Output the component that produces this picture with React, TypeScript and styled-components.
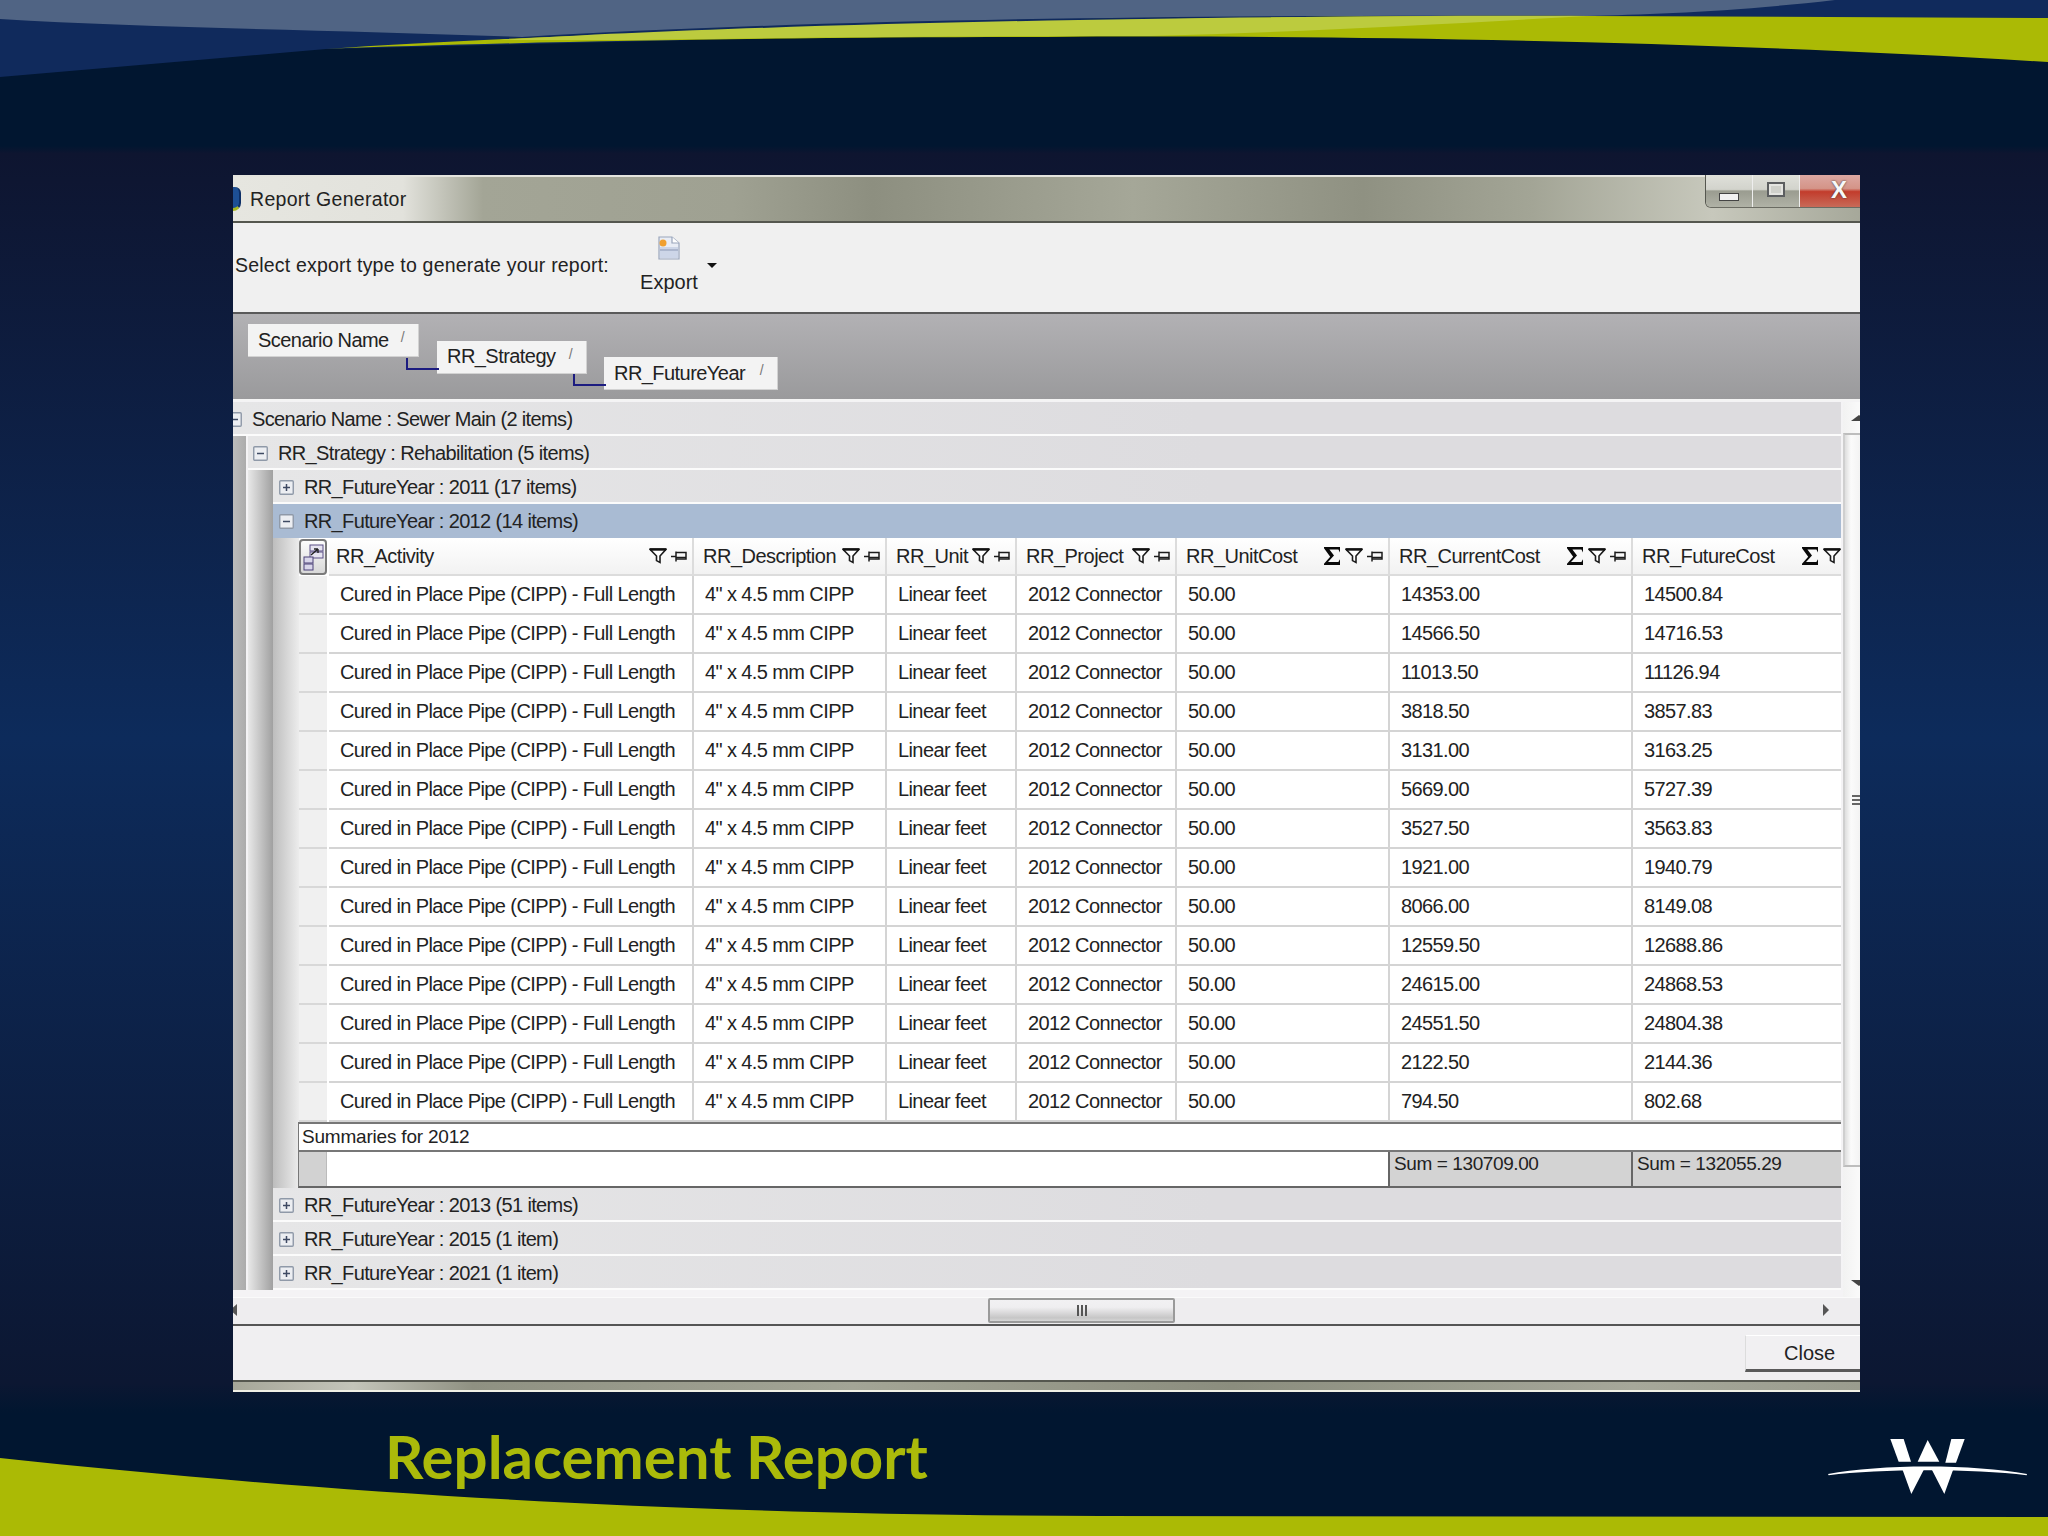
import React from 'react'
import styled, { createGlobalStyle } from 'styled-components'

const COLUMNS = '30px 365px 193px 130px 160px 213px 243px 208px'

const costs = [
  ['14353.00', '14500.84'],
  ['14566.50', '14716.53'],
  ['11013.50', '11126.94'],
  ['3818.50', '3857.83'],
  ['3131.00', '3163.25'],
  ['5669.00', '5727.39'],
  ['3527.50', '3563.83'],
  ['1921.00', '1940.79'],
  ['8066.00', '8149.08'],
  ['12559.50', '12688.86'],
  ['24615.00', '24868.53'],
  ['24551.50', '24804.38'],
  ['2122.50', '2144.36'],
  ['794.50', '802.68'],
]

const headers = [
  { title: 'RR_Activity', sum: false, pin: true },
  { title: 'RR_Description', sum: false, pin: true },
  { title: 'RR_Unit', sum: false, pin: true },
  { title: 'RR_Project', sum: false, pin: true },
  { title: 'RR_UnitCost', sum: true, pin: true },
  { title: 'RR_CurrentCost', sum: true, pin: true },
  { title: 'RR_FutureCost', sum: true, pin: false },
]

const FilterIcon = () => (
  <svg width="18" height="16" viewBox="0 0 18 16">
    <path d="M1 1.4H17L11 8V14.5L7.5 12.6V8Z" fill="#fff" stroke="#1c1c1c" strokeWidth="1.6" />
    <path d="M1 1.4H17" stroke="#111" strokeWidth="2.4" />
  </svg>
)

const PinIcon = () => (
  <svg width="16" height="13" viewBox="0 0 16 13">
    <path d="M0 6.5H5M5 1.5V11.5M5 2.5H15V9H5" fill="none" stroke="#1c1c1c" strokeWidth="1.5" />
    <path d="M5 7.5H15" stroke="#1c1c1c" strokeWidth="1.5" />
  </svg>
)

const SigmaIcon = () => (
  <svg width="18" height="20" viewBox="0 0 18 20">
    <path d="M1 1H17V6.5L15.4 3.6H6.4L11 9.6L5 16H15.4L17 13.2V19H1V17.8L7.2 10.8L1 2.2Z" fill="#0a0a0a" />
  </svg>
)

const Expander = ({ open }: { open: boolean }) => (
  <svg width="15" height="15" viewBox="0 0 15 15">
    <rect x="0.75" y="0.75" width="13.5" height="13.5" rx="1" fill="#eceef2" stroke="#8f99a8" strokeWidth="1.4" />
    <path d={open ? 'M4 7.5H11' : 'M4 7.5H11M7.5 4V11'} stroke="#3e4a63" strokeWidth="1.5" />
  </svg>
)

const ColumnsIcon = () => (
  <svg width="21" height="27" viewBox="0 0 21 27">
    <rect x="7" y="1" width="13" height="6" fill="#e6e4f0" stroke="#5a4f86" />
    <rect x="7" y="8" width="13" height="6" fill="#e6e4f0" stroke="#5a4f86" />
    <rect x="1" y="13" width="9" height="6" fill="#d9d6ea" stroke="#4b4178" />
    <rect x="1" y="20" width="9" height="6" fill="#d9d6ea" stroke="#4b4178" />
    <path d="M8 11L15 5M15 5H11M15 5V9" fill="none" stroke="#222" strokeWidth="1.4" />
  </svg>
)

const ExportIcon = () => (
  <svg width="22" height="24" viewBox="0 0 22 24">
    <path d="M1 1H14L21 7V23H1Z" fill="#e9edf5" stroke="#9aa6bc" strokeWidth="1.2" />
    <path d="M14 1V7H21" fill="#fff" stroke="#9aa6bc" strokeWidth="1.2" />
    <rect x="2" y="11" width="18" height="11" fill="#cdd6e8" />
    <path d="M2 14H20" stroke="#8b97b3" />
    <circle cx="5" cy="7" r="3.5" fill="#f0a030" />
  </svg>
)

const Logo = () => (
  <LogoMark width="199" height="55" viewBox="143 57 597 165">
    <path d="M330 57H370L392 125H355Z" fill="#fff" />
    <path d="M442 60L477 125H412Z" fill="#fff" />
    <path d="M513 57H553L527 128H495Z" fill="#fff" />
    <path d="M143 162C300 132 580 132 740 162L739 166C580 146 300 146 145 166Z" fill="#fff" />
    <path d="M365 145H520L492 222L455 150H430L393 222Z" fill="#fff" />
  </LogoMark>
)

const App: React.FunctionComponent = () => (
  <Page>
    <GlobalStyle />
    <Backdrop viewBox="0 0 2048 1536" preserveAspectRatio="none">
      <defs>
        <linearGradient id="slide" x1="0" y1="0" x2="0" y2="1536" gradientUnits="userSpaceOnUse">
          <stop offset="0" stopColor="#011630" />
          <stop offset="0.095" stopColor="#011630" />
          <stop offset="0.1" stopColor="#0e1530" />
          <stop offset="0.48" stopColor="#0d2b5b" />
          <stop offset="0.9" stopColor="#0c1732" />
          <stop offset="0.92" stopColor="#011630" />
          <stop offset="1" stopColor="#011630" />
        </linearGradient>
      </defs>
      <rect width="2048" height="1536" fill="url(#slide)" />
      <path d="M0 0H2048V18H1587L326 49L0 77Z" fill="#102a5c" />
      <path d="M0 0H1835C1730 12 1650 14 1587 16C1200 14 800 20 522 37C340 30 150 28 0 19Z" fill="#506484" />
      <path d="M326 49C600 30 1200 14 1587 16L2048 18V62C1700 40 1300 35 1045 37C800 37 500 42 326 49Z" fill="#abba05" />
      <path d="M500 40C750 24 1200 15 1587 16C1450 24 1300 32 1150 36C950 36 750 38 640 40Z" fill="#bccb3e" />
      <path d="M0 1458C300 1490 650 1515 1100 1516L2048 1517V1536H0Z" fill="#abba05" />
    </Backdrop>

    <WindowSlot>
      <Window>
        <TitleBar>
          <AppIcon />
          <TitleText>Report Generator</TitleText>
          <Caption>
            <CaptionButton>
              <MinGlyph />
            </CaptionButton>
            <CaptionButton>
              <MaxGlyph />
            </CaptionButton>
            <CloseButton>X</CloseButton>
          </Caption>
        </TitleBar>

        <Toolbar>
          <ToolbarLabel>Select export type to generate your report:</ToolbarLabel>
          <ExportButton>
            <ExportIcon />
            <ExportLabel>Export</ExportLabel>
          </ExportButton>
          <DropArrow />
        </Toolbar>

        <GroupPanel>
          <Chip $level={0} $width={171}>
            Scenario Name<SortMark>/</SortMark>
          </Chip>
          <Chip $level={1} $width={150} $gap={18}>
            RR_Strategy<SortMark>/</SortMark>
          </Chip>
          <Chip $level={2} $width={174} $gap={17}>
            RR_FutureYear<SortMark>/</SortMark>
          </Chip>
        </GroupPanel>

        <GridArea>
          <Tree>
            <GroupRow $pad={0} $nudge={-6}>
              <Expander open />
              <GroupText>Scenario Name : Sewer Main (2 items)</GroupText>
            </GroupRow>
            <Indent>
              <Gutter $width={13} $tone="outer" />
              <IndentBody>
                <GroupRow $pad={5}>
                  <Expander open />
                  <GroupText>RR_Strategy : Rehabilitation (5 items)</GroupText>
                </GroupRow>
                <Indent>
                  <Gutter $width={25} $tone="middle" />
                  <IndentFill>
                    <GroupRow $pad={6}>
                      <Expander open={false} />
                      <GroupText>RR_FutureYear : 2011 (17 items)</GroupText>
                    </GroupRow>
                    <GroupRow $pad={6} $selected>
                      <Expander open />
                      <GroupText>RR_FutureYear : 2012 (14 items)</GroupText>
                    </GroupRow>
                    <Indent>
                      <Gutter $width={26} $tone="inner" />
                      <TableBlock>
                        <HeaderRow>
                          <CornerCell>
                            <ColumnsIcon />
                          </CornerCell>
                          {headers.map(h => (
                            <HeaderCell key={h.title}>
                              <HeaderTitle>{h.title}</HeaderTitle>
                              {h.sum && <SigmaIcon />}
                              <FilterIcon />
                              {h.pin && <PinIcon />}
                            </HeaderCell>
                          ))}
                        </HeaderRow>
                        {costs.map(([current, future], i) => (
                          <DataRow key={i}>
                            <SelectorCell />
                            <DataCell>Cured in Place Pipe (CIPP) - Full Length</DataCell>
                            <DataCell>4" x 4.5 mm CIPP</DataCell>
                            <DataCell>Linear feet</DataCell>
                            <DataCell>2012 Connector</DataCell>
                            <DataCell>50.00</DataCell>
                            <DataCell>{current}</DataCell>
                            <DataCell>{future}</DataCell>
                          </DataRow>
                        ))}
                        <SummaryTitle>Summaries for 2012</SummaryTitle>
                        <SummaryRow>
                          <SummarySelector />
                          <SummaryBlank />
                          <SummaryCell>Sum = 130709.00</SummaryCell>
                          <SummaryCell>Sum = 132055.29</SummaryCell>
                        </SummaryRow>
                      </TableBlock>
                    </Indent>
                    <GroupRow $pad={6}>
                      <Expander open={false} />
                      <GroupText>RR_FutureYear : 2013 (51 items)</GroupText>
                    </GroupRow>
                    <GroupRow $pad={6}>
                      <Expander open={false} />
                      <GroupText>RR_FutureYear : 2015 (1 item)</GroupText>
                    </GroupRow>
                    <GroupRow $pad={6}>
                      <Expander open={false} />
                      <GroupText>RR_FutureYear : 2021 (1 item)</GroupText>
                    </GroupRow>
                  </IndentFill>
                </Indent>
              </IndentBody>
            </Indent>
          </Tree>
          <VScroll>
            <VArrowSlot>
              <ArrowUp />
            </VArrowSlot>
            <VThumb>
              <Grip />
              <Grip />
              <Grip />
            </VThumb>
            <VArrowSlot $end>
              <ArrowDown />
            </VArrowSlot>
          </VScroll>
        </GridArea>

        <HScroll>
          <ArrowLeft />
          <HThumb>
            <HGrip />
            <HGrip />
            <HGrip />
          </HThumb>
          <ArrowRight />
        </HScroll>

        <WindowFooter>
          <CloseAction>Close</CloseAction>
        </WindowFooter>
        <BottomFrame />
      </Window>
    </WindowSlot>

    <SlideFooter>
      <SlideTitle>Replacement Report</SlideTitle>
      <Logo />
    </SlideFooter>
  </Page>
)

export default App

const GlobalStyle = createGlobalStyle`
  html, body {
    margin: 0;
    padding: 0;
    background: #011630;
  }
  * {
    box-sizing: border-box;
  }
`

const Page = styled.div`
  position: relative;
  width: 2048px;
  height: 1536px;
  overflow: hidden;
  font-family: 'Liberation Sans', Arial, sans-serif;
  font-size: 20px;
  color: #222;
`

const Backdrop = styled.svg`
  position: absolute;
  inset: 0;
  width: 2048px;
  height: 1536px;
`

const WindowSlot = styled.div`
  position: relative;
  padding: 175px 188px 0 233px;
`

const Window = styled.div`
  width: 1627px;
  height: 1217px;
  display: flex;
  flex-direction: column;
  overflow: hidden;
  background: #f0eff1;
`

const TitleBar = styled.div`
  height: 48px;
  flex: none;
  display: flex;
  align-items: center;
  position: relative;
  border-top: 2px solid #e4e4de;
  border-bottom: 2px solid #55574f;
  background: linear-gradient(
    90deg,
    #e6e6e0 0,
    #e2e2dc 170px,
    #a3a596 250px,
    #9fa192 500px,
    #8d8f80 640px,
    #a5a798 900px,
    #8f9182 1130px,
    #a3a596 1300px,
    #c7c8bc 1480px,
    #a6a89a 1627px
  );
`

const AppIcon = styled.span`
  width: 8px;
  height: 24px;
  margin-right: 9px;
  border-radius: 0 6px 8px 0;
  background: #1d4f94;
  border-right: 2px solid #0d2f66;
  border-bottom: 3px solid #a8b820;
`

const TitleText = styled.span`
  font-size: 19.5px;
  letter-spacing: 0.3px;
`

const Caption = styled.div`
  position: absolute;
  top: -2px;
  right: 0;
  height: 33px;
  width: 155px;
  display: flex;
  border-left: 1px solid #55574f;
  border-bottom: 1px solid #6a6b62;
  border-radius: 0 0 0 6px;
  overflow: hidden;
`

const CaptionButton = styled.div`
  width: 47px;
  display: flex;
  align-items: center;
  justify-content: center;
  border-right: 1px solid #eee;
  background: linear-gradient(#dfe0da, #d2d3cc 45%, #9a9c90 50%, #b0b2a6);
`

const MinGlyph = styled.span`
  width: 20px;
  height: 8px;
  margin-top: 12px;
  background: #f2f2f2;
  border: 1px solid #444;
`

const MaxGlyph = styled.span`
  width: 18px;
  height: 15px;
  margin-top: -4px;
  background: #cfd0ca;
  border: 2px solid #5c5e60;
  box-shadow: inset 0 0 0 2px #e4e4e0;
`

const CloseButton = styled.div`
  flex: 1;
  display: flex;
  align-items: center;
  justify-content: flex-end;
  padding: 0 13px 3px 0;
  color: #f8f8f8;
  font-size: 24px;
  font-weight: 700;
  text-shadow: 0 0 2px #333;
  background: linear-gradient(#dca8a2, #d49488 42%, #c23c2c 52%, #c86a58);
`

const Toolbar = styled.div`
  height: 91px;
  flex: none;
  display: flex;
  align-items: center;
  padding-left: 2px;
  border-bottom: 2px solid #5a5a5a;
  background: #f0f0f0;
`

const ToolbarLabel = styled.span`
  width: 405px;
  margin-top: -4px;
  font-size: 19.5px;
  letter-spacing: 0.2px;
`

const ExportButton = styled.div`
  display: flex;
  flex-direction: column;
  align-items: center;
  gap: 11px;
  width: 58px;
  margin-top: -6px;
`

const ExportLabel = styled.span`
  font-size: 20px;
`

const DropArrow = styled.span`
  width: 0;
  height: 0;
  margin: -5px 0 0 9px;
  border-left: 5px solid transparent;
  border-right: 5px solid transparent;
  border-top: 5px solid #111;
`

const GroupPanel = styled.div`
  height: 87px;
  flex: none;
  display: flex;
  align-items: flex-start;
  padding-left: 15px;
  border-bottom: 2px solid #f4f4f4;
  background: linear-gradient(#b2b1b4, #9a9a9c);
`

const Chip = styled.div<{ $level: number; $width: number; $gap?: number }>`
  position: relative;
  width: ${({ $width }) => $width}px;
  height: 33px;
  margin-top: ${({ $level }) => 10 + $level * 16.5}px;
  margin-left: ${({ $gap }) => $gap ?? 0}px;
  padding: 0 14px 0 10px;
  display: flex;
  align-items: center;
  font-size: 20px;
  letter-spacing: -0.55px;
  white-space: nowrap;
  background: #f3f3f3;
  border-right: 1px solid #d2d2d2;
  border-bottom: 1px solid #d2d2d2;

  &::before {
    content: ${({ $gap }) => ($gap ? "''" : 'none')};
    position: absolute;
    left: -31px;
    top: 17px;
    width: 31px;
    height: 10px;
    border-left: 2px solid #1c1c80;
    border-bottom: 2px solid #1c1c80;
  }
`

const SortMark = styled.span`
  margin: -6px 0 0 auto;
  font-size: 14px;
  color: #777;
`

const GridArea = styled.div`
  height: 896px;
  flex: none;
  display: flex;
  padding-top: 1px;
  gap: 2px;
  background: #f4f3f5;
`

const Tree = styled.div`
  width: 1608px;
  overflow: hidden;
  display: flex;
  flex-direction: column;
`

const GroupRow = styled.div<{ $pad: number; $nudge?: number; $selected?: boolean }>`
  height: 34px;
  flex: none;
  display: flex;
  align-items: center;
  gap: 10px;
  padding-top: 3px;
  padding-left: ${({ $pad }) => $pad}px;
  border-bottom: 2px solid ${({ $selected }) => ($selected ? '#a9bbd3' : '#fbfbfb')};
  background: ${({ $selected }) => ($selected ? '#a9bbd3' : 'linear-gradient(90deg, #e6e6e7, #dddcdf 60%)')};

  & > svg {
    flex: none;
    margin-left: ${({ $nudge }) => $nudge ?? 0}px;
  }
`

const GroupText = styled.span`
  font-size: 20px;
  letter-spacing: -0.64px;
`

const Indent = styled.div`
  display: flex;
`

const IndentBody = styled.div`
  flex: 1;
  margin-left: 2px;
  display: flex;
  flex-direction: column;
`

const IndentFill = styled.div`
  flex: 1;
  display: flex;
  flex-direction: column;
`

const Gutter = styled.div<{ $width: number; $tone: 'outer' | 'middle' | 'inner' }>`
  flex: none;
  width: ${({ $width }) => $width}px;
  background: ${({ $tone }) =>
    $tone === 'outer'
      ? 'linear-gradient(90deg, #bcbcbc, #acacac)'
      : $tone === 'middle'
        ? 'linear-gradient(90deg, #e8e8e8, #a0a0a0)'
        : 'linear-gradient(90deg, #bdbdbd, #ececec)'};
`

const TableBlock = styled.div`
  width: 1542px;
  display: flex;
  flex-direction: column;
  background: #fff;
`

const HeaderRow = styled.div`
  height: 38px;
  display: grid;
  grid-template-columns: ${COLUMNS};
`

const CornerCell = styled.div`
  height: 36px;
  margin-top: 1px;
  display: flex;
  align-items: center;
  justify-content: center;
  width: 28px;
  border: 2px solid #7a7a7a;
  border-radius: 4px;
  background: linear-gradient(#fdfdfd, #d8d8d8);
`

const HeaderCell = styled.div`
  display: flex;
  align-items: center;
  gap: 4px;
  padding: 0 5px 0 9px;
  overflow: hidden;
  background: linear-gradient(#ffffff, #f2f2f2);
  border-right: 2px solid #dcdcdc;
  border-bottom: 2px solid #dcdcdc;

  &:nth-child(2) {
    padding-left: 7px;
  }

  &:last-child {
    padding-right: 0;
    border-right: 0;
  }

  & > svg {
    flex: none;
  }
`

const HeaderTitle = styled.span`
  flex: 1;
  font-size: 20px;
  letter-spacing: -0.5px;
  white-space: nowrap;
`

const DataRow = styled.div`
  height: 39px;
  display: grid;
  grid-template-columns: ${COLUMNS};
`

const SelectorCell = styled.div`
  margin-right: 2px;
  background: #f0f0f0;
  border-bottom: 2px solid #d8d8d8;
`

const DataCell = styled.div`
  display: flex;
  align-items: center;
  padding-left: 11px;
  font-size: 20px;
  letter-spacing: -0.6px;
  white-space: nowrap;
  background: #fff;
  border-right: 2px solid #d4d4d4;
  border-bottom: 2px solid #d4d4d4;

  &:last-child {
    border-right: 0;
  }
`

const SummaryTitle = styled.div`
  height: 30px;
  display: flex;
  align-items: center;
  padding-left: 3px;
  margin-left: -1px;
  font-size: 19px;
  letter-spacing: -0.2px;
  border-top: 2px solid #777;
  border-left: 1px solid #777;
  border-bottom: 2px solid #777;
  background: #fff;
`

const SummaryRow = styled.div`
  height: 36px;
  margin-left: -1px;
  display: grid;
  grid-template-columns: 28px 1063px 243px 208px;
  border-left: 1px solid #777;
  border-bottom: 2px solid #666;
`

const SummarySelector = styled.div`
  background: #d2d2d2;
  border-right: 1px solid #bbb;
`

const SummaryBlank = styled.div`
  border-right: 2px solid #666;
`

const SummaryCell = styled.div`
  padding: 1px 0 0 4px;
  font-size: 19px;
  letter-spacing: -0.4px;
  background: #d3d3d3;
  border-right: 2px solid #666;

  &:last-child {
    border-right: 0;
  }
`

const VScroll = styled.div`
  width: 17px;
  display: flex;
  flex-direction: column;
  overflow: hidden;
  background: linear-gradient(90deg, #f2f2f2, #fafafa);
`

const VArrowSlot = styled.div<{ $end?: boolean }>`
  flex: ${({ $end }) => ($end ? 1 : 'none')};
  height: 31px;
  display: flex;
  align-items: ${({ $end }) => ($end ? 'flex-end' : 'center')};
  justify-content: flex-end;
  padding-bottom: ${({ $end }) => ($end ? 11 : 0)}px;
`

const ArrowUp = styled.span`
  width: 0;
  height: 0;
  margin-right: -7px;
  border-left: 8px solid transparent;
  border-right: 8px solid transparent;
  border-bottom: 6px solid #444;
`

const ArrowDown = styled(ArrowUp)`
  border-bottom: 0;
  border-top: 6px solid #444;
`

const VThumb = styled.div`
  height: 734px;
  flex: none;
  display: flex;
  flex-direction: column;
  justify-content: center;
  align-items: flex-end;
  gap: 2px;
  background: linear-gradient(90deg, #dedede, #fbfbfb 40%, #f3f3f3);
  border-top: 2px solid #bdbdbd;
  border-left: 2px solid #cfcfcf;
  border-bottom: 2px solid #bdbdbd;
`

const Grip = styled.span`
  width: 8px;
  height: 2px;
  background: #666;
`

const HScroll = styled.div`
  height: 29px;
  flex: none;
  display: flex;
  align-items: flex-start;
  position: relative;
  padding-left: 755px;
  border-top: 1px solid #fafafa;
  border-bottom: 2px solid #555;
  background: #eeedef;
`

const ArrowLeft = styled.span`
  position: absolute;
  left: -3px;
  top: 6px;
  width: 0;
  height: 0;
  border-top: 6px solid transparent;
  border-bottom: 6px solid transparent;
  border-right: 7px solid #555;
`

const ArrowRight = styled.span`
  position: absolute;
  right: 31px;
  top: 6px;
  width: 0;
  height: 0;
  border-top: 6px solid transparent;
  border-bottom: 6px solid transparent;
  border-left: 6px solid #555;
`

const HThumb = styled.div`
  width: 187px;
  height: 25px;
  display: flex;
  align-items: center;
  justify-content: center;
  gap: 2px;
  border: 2px solid #9a9a9a;
  border-radius: 2px;
  background: linear-gradient(#f2f1f3, #efeef0 35%, #c6c6c6 85%, #d6d6d6);
`

const HGrip = styled.span`
  width: 2px;
  height: 11px;
  background: #555;
`

const WindowFooter = styled.div`
  height: 54px;
  flex: none;
  display: flex;
  justify-content: flex-end;
  align-items: flex-start;
  padding-top: 9px;
  background: #f0eff1;
`

const CloseAction = styled.div`
  width: 115px;
  height: 37px;
  display: flex;
  align-items: center;
  padding: 1px 0 0 38px;
  font-size: 20px;
  background: #f1f0f2;
  border-top: 1px solid #fff;
  border-left: 1px solid #dcdcdc;
  border-bottom: 3px solid #5a5a5a;
`

const BottomFrame = styled.div`
  height: 12px;
  flex: none;
  border-top: 2px solid #55574f;
  border-bottom: 2px solid #f0f0e6;
  background: linear-gradient(90deg, #a5a698, #c4c5ba 120px, #8f9182 240px, #a3a596 620px, #8b8d7e 1000px, #a6a89a 1400px, #9a9c8e);
`

const SlideFooter = styled.div`
  position: relative;
  display: flex;
  justify-content: space-between;
  align-items: flex-start;
  padding: 29px 21px 0 385px;
`

const SlideTitle = styled.h1`
  margin: 0;
  font-family: Lato, 'Open Sans', sans-serif;
  font-size: 60px;
  line-height: 70px;
  font-weight: 700;
  color: #abba0a;
`

const LogoMark = styled.svg`
  margin-top: 18px;
`
